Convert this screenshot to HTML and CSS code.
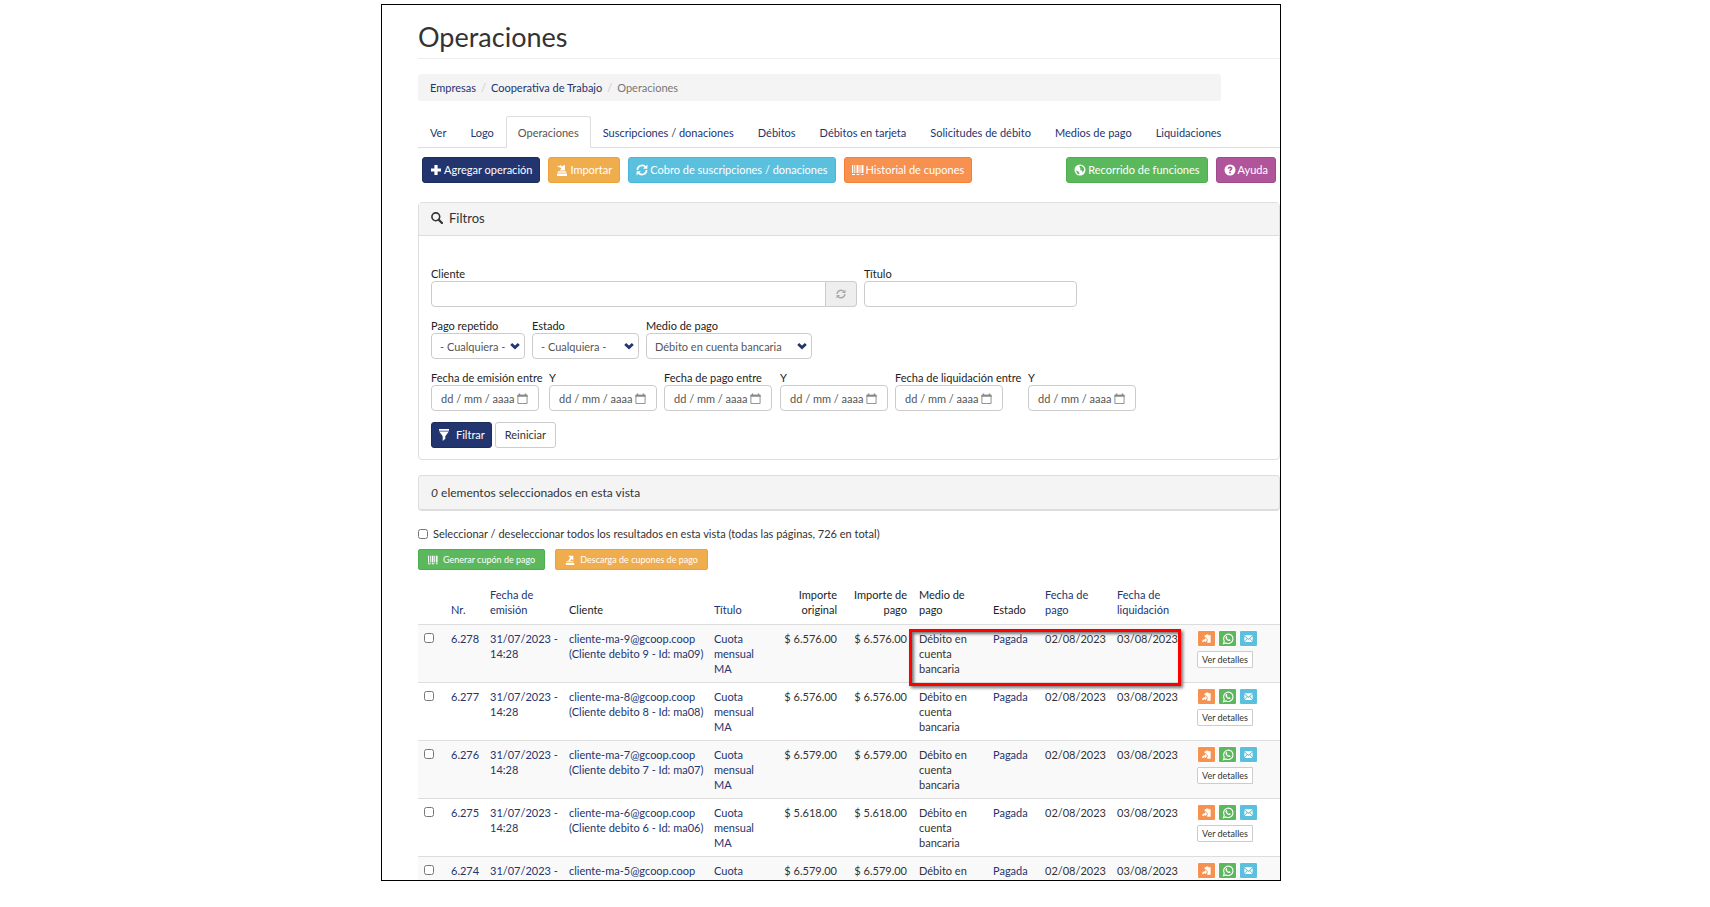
FILE: index.html
```
<!DOCTYPE html>
<html lang="es">
<head>
<meta charset="utf-8">
<title>Operaciones</title>
<link rel="stylesheet" href="styles.css">
</head>
<body>
<svg class="sprite" aria-hidden="true">
  <symbol id="plus" viewBox="0 0 12 12"><path d="M4.4 1h3.2v3.4H11v3.2H7.6V11H4.400V7.600H1V4.400h3.400z"/></symbol>
  <symbol id="import" viewBox="0 0 12 12"><path d="M1 9.500h10V12H1zM2.200 7.200h7.600l.8 1.500H1.400zM1.500 1.500l1.800.7L4.400.8l1 1.400L9 1v5.500H3.800L5.500 4.300 1.500 2.600z"/></symbol>
  <symbol id="export" viewBox="0 0 12 12"><path d="M1 9.500h10V12H1zM2.200 7.500h7.600l.7 1.300h-9zM4 1h6v5.500L8.200 4.800 6 7.200 3.800 7l2.400-3.500z"/></symbol>
  <symbol id="refresh" viewBox="0 0 12 12"><path d="M1.400 6A4.600 4.600 0 0 1 9.500 3.100M10.600 6a4.600 4.600 0 0 1-8.100 2.900" fill="none" stroke="currentColor" stroke-width="1.700"/><path d="M11.400.500v4.300H7.100zM.600 11.500V7.200h4.300z"/></symbol>
  <symbol id="barcode" viewBox="0 0 12 12"><path d="M0 1h1.200v8H0zM2.300 1h1v8h-1zM4.500 1h2v8h-2zM7.500 1h1v8h-1zM9.500 1h2v8h-2zM0 10h3v1H0zM4.500 10h3v1h-3zM9.500 10h2v1h-2z"/></symbol>
  <symbol id="globe" viewBox="0 0 12 12"><path fill-rule="evenodd" d="M6 .500a5.500 5.500 0 1 1 0 11 5.500 5.500 0 0 1 0-11zM5.200 2.200 7.500 1.800 9.800 3.800 10.200 6 8.600 8.400 7.800 6.300 6 6.200 6.500 4.500zM2 6.500 4.500 7.500 5.500 9 5 10.400 3 9.200z"/></symbol>
  <symbol id="question" viewBox="0 0 12 12"><path fill-rule="evenodd" d="M6 .500a5.500 5.500 0 1 1 0 11 5.500 5.500 0 0 1 0-11zM3.700 4.700h1.600c0-1 1.400-1 1.400-.1 0 .8-1.500.8-1.500 2.600h1.600c0-1 1.600-1.100 1.600-2.700 0-2.700-4.700-2.600-4.700.2zM5.200 8v1.500h1.600V8z"/></symbol>
  <symbol id="search" viewBox="0 0 12 12"><circle cx="4.800" cy="4.800" r="3.900" fill="none" stroke="currentColor" stroke-width="1.600"/><path d="M7.700 7.700 11 11" stroke="currentColor" stroke-width="2.200" stroke-linecap="round"/></symbol>
  <symbol id="chevron" viewBox="0 0 10 8"><path d="M1.200 2 5 5.600 8.800 2" fill="none" stroke="currentColor" stroke-width="2.800"/></symbol>
  <symbol id="calendar" viewBox="0 0 12 12"><path d="M1 2.500h10v9H1z" fill="none" stroke="currentColor"/><path d="M.500 2h11v2H.500zM2 .500h1.500V2H2zM8.500.500H10V2H8.500z"/></symbol>
  <symbol id="filter" viewBox="0 0 12 12"><path d="M1 0h10v1.700H1zM1.200 2.500h9.600L7.300 7.200v2.600L4.700 12V7.200z"/></symbol>
  <symbol id="paste" viewBox="0 0 12 12"><path d="M3.500 1.500h2V.500h3v1h3V11.500H7V9.500L8 8 5.500 5v-.8h-2zM1 7.500l3-.5V5l3 3-3 3V9.300L2 10.500H0z"/></symbol>
  <symbol id="whatsapp" viewBox="0 0 12 12"><path d="M1.500 10.600l.7-2.500A4.700 4.700 0 1 1 4 9.900z" fill="none" stroke="currentColor" stroke-width="1.100"/><path d="M4 3.200c.4-.4.800-.2.900.1l.4 1c0 .3-.5.600-.4.800.4.800 1 1.300 1.800 1.600.3 0 .5-.6.800-.5l1 .5c.3.200 0 1-.5 1.200C6 8.500 3.200 5.800 3.500 4.200z"/></symbol>
  <symbol id="mail" viewBox="0 0 12 12"><path d="M.5 1.500h11L6 6.300zM.5 3 3.700 6 .5 9.500zM11.500 3v6.500L8.300 6zM4.500 6.800 6 8l1.500-1.200L11 10.500H1z"/></symbol>
</svg>
<main class="frame">
  <h1 class="title">Operaciones</h1>
  <nav class="crumbs" aria-label="Ruta">
    <a href="#">Empresas</a><span class="sep">/</span><a href="#">Cooperativa de Trabajo</a><span class="sep">/</span><span class="here">Operaciones</span>
  </nav>
  <nav class="tabs" aria-label="Secciones">
    <a href="#">Ver</a><a href="#">Logo</a><a href="#" class="active">Operaciones</a><a href="#">Suscripciones / donaciones</a><a href="#">Débitos</a><a href="#">Débitos en tarjeta</a><a href="#">Solicitudes de débito</a><a href="#">Medios de pago</a><a href="#">Liquidaciones</a>
  </nav>
  <div class="toolbar">
    <button class="btn navy"><svg><use href="#plus"/></svg>Agregar operación</button>
    <button class="btn amber"><svg><use href="#import"/></svg>Importar</button>
    <button class="btn sky"><svg><use href="#refresh"/></svg>Cobro de suscripciones / donaciones</button>
    <button class="btn orange"><svg><use href="#barcode"/></svg>Historial de cupones</button>
    <button class="btn green push"><svg><use href="#globe"/></svg>Recorrido de funciones</button>
    <button class="btn purple"><svg><use href="#question"/></svg>Ayuda</button>
  </div>

  <section class="panel">
    <h2 class="panel-head"><svg><use href="#search"/></svg>Filtros</h2>
    <form class="filters">
      <div class="row">
        <div class="field client"><label for="cliente">Cliente</label>
          <div class="group"><input id="cliente" type="text"><span class="addon"><svg><use href="#refresh"/></svg></span></div></div>
        <div class="field subject"><label for="titulo">Título</label><input id="titulo" type="text"></div>
      </div>
      <div class="row">
        <div class="field repeated"><label for="repetido">Pago repetido</label><div class="pick"><select id="repetido"><option>- Cualquiera -</option></select><svg><use href="#chevron"/></svg></div></div>
        <div class="field status"><label for="estado">Estado</label><div class="pick"><select id="estado"><option>- Cualquiera -</option></select><svg><use href="#chevron"/></svg></div></div>
        <div class="field method"><label for="medio">Medio de pago</label><div class="pick"><select id="medio"><option>Débito en cuenta bancaria</option></select><svg><use href="#chevron"/></svg></div></div>
      </div>
      <div class="dates">
        <div class="field"><label for="d1">Fecha de emisión entre</label><div class="date"><input id="d1" type="text" value="dd / mm / aaaa"><svg><use href="#calendar"/></svg></div></div>
        <div class="field"><label for="d2">Y</label><div class="date"><input id="d2" type="text" value="dd / mm / aaaa"><svg><use href="#calendar"/></svg></div></div>
        <div class="field"><label for="d3">Fecha de pago entre</label><div class="date"><input id="d3" type="text" value="dd / mm / aaaa"><svg><use href="#calendar"/></svg></div></div>
        <div class="field"><label for="d4">Y</label><div class="date"><input id="d4" type="text" value="dd / mm / aaaa"><svg><use href="#calendar"/></svg></div></div>
        <div class="field"><label for="d5">Fecha de liquidación entre</label><div class="date"><input id="d5" type="text" value="dd / mm / aaaa"><svg><use href="#calendar"/></svg></div></div>
        <div class="field"><label for="d6">Y</label><div class="date"><input id="d6" type="text" value="dd / mm / aaaa"><svg><use href="#calendar"/></svg></div></div>
      </div>
      <div class="actions">
        <button class="btn navy spaced" type="button"><svg><use href="#filter"/></svg>Filtrar</button>
        <button class="btn plain" type="reset">Reiniciar</button>
      </div>
    </form>
  </section>

  <div class="selected"><em>0</em> elementos seleccionados en esta vista</div>
  <label class="all"><input type="checkbox">Seleccionar / deseleccionar todos los resultados en esta vista (todas las páginas, 726 en total)</label>
  <div class="bulk">
    <button class="btn small green"><svg><use href="#barcode"/></svg>Generar cupón de pago</button>
    <button class="btn small amber"><svg><use href="#export"/></svg>Descarga de cupones de pago</button>
  </div>

  <table class="ops">
    <colgroup><col class="c-check"><col class="c-nr"><col class="c-issued"><col class="c-client"><col class="c-title"><col class="c-amount"><col class="c-paid"><col class="c-method"><col class="c-status"><col class="c-date"><col class="c-settled"><col></colgroup>
    <thead><tr>
      <th></th><th><a href="#">Nr.</a></th><th><a href="#">Fecha de<br>emisión</a></th><th>Cliente</th><th><a href="#">Título</a></th><th class="num">Importe<br>original</th><th class="num">Importe de<br>pago</th><th>Medio de<br>pago</th><th>Estado</th><th><a href="#">Fecha de<br>pago</a></th><th><a href="#">Fecha de<br>liquidación</a></th><th></th>
    </tr></thead>
    <tbody>
      <tr><td><input type="checkbox" aria-label="6.278"></td><td><a href="#">6.278</a></td><td><a href="#">31/07/2023 -<br>14:28</a></td><td><a href="#">cliente-ma-9@gcoop.coop<br>(Cliente debito 9 - Id: ma09)</a></td><td><a href="#">Cuota<br>mensual<br>MA</a></td><td class="num">$ 6.576.00</td><td class="num">$ 6.576.00</td><td class="marked">Débito en<br>cuenta<br>bancaria<div class="mark"></div></td><td><a href="#">Pagada</a></td><td>02/08/2023</td><td>03/08/2023</td>
        <td class="tools"><div class="icons"><button class="mini orange" aria-label="Copiar"><svg><use href="#paste"/></svg></button><button class="mini green" aria-label="WhatsApp"><svg><use href="#whatsapp"/></svg></button><button class="mini sky" aria-label="Correo"><svg><use href="#mail"/></svg></button></div><button class="details">Ver detalles</button></td></tr>
      <tr><td><input type="checkbox" aria-label="6.277"></td><td><a href="#">6.277</a></td><td><a href="#">31/07/2023 -<br>14:28</a></td><td><a href="#">cliente-ma-8@gcoop.coop<br>(Cliente debito 8 - Id: ma08)</a></td><td><a href="#">Cuota<br>mensual<br>MA</a></td><td class="num">$ 6.576.00</td><td class="num">$ 6.576.00</td><td>Débito en<br>cuenta<br>bancaria</td><td><a href="#">Pagada</a></td><td>02/08/2023</td><td>03/08/2023</td>
        <td class="tools"><div class="icons"><button class="mini orange" aria-label="Copiar"><svg><use href="#paste"/></svg></button><button class="mini green" aria-label="WhatsApp"><svg><use href="#whatsapp"/></svg></button><button class="mini sky" aria-label="Correo"><svg><use href="#mail"/></svg></button></div><button class="details">Ver detalles</button></td></tr>
      <tr><td><input type="checkbox" aria-label="6.276"></td><td><a href="#">6.276</a></td><td><a href="#">31/07/2023 -<br>14:28</a></td><td><a href="#">cliente-ma-7@gcoop.coop<br>(Cliente debito 7 - Id: ma07)</a></td><td><a href="#">Cuota<br>mensual<br>MA</a></td><td class="num">$ 6.579.00</td><td class="num">$ 6.579.00</td><td>Débito en<br>cuenta<br>bancaria</td><td><a href="#">Pagada</a></td><td>02/08/2023</td><td>03/08/2023</td>
        <td class="tools"><div class="icons"><button class="mini orange" aria-label="Copiar"><svg><use href="#paste"/></svg></button><button class="mini green" aria-label="WhatsApp"><svg><use href="#whatsapp"/></svg></button><button class="mini sky" aria-label="Correo"><svg><use href="#mail"/></svg></button></div><button class="details">Ver detalles</button></td></tr>
      <tr><td><input type="checkbox" aria-label="6.275"></td><td><a href="#">6.275</a></td><td><a href="#">31/07/2023 -<br>14:28</a></td><td><a href="#">cliente-ma-6@gcoop.coop<br>(Cliente debito 6 - Id: ma06)</a></td><td><a href="#">Cuota<br>mensual<br>MA</a></td><td class="num">$ 5.618.00</td><td class="num">$ 5.618.00</td><td>Débito en<br>cuenta<br>bancaria</td><td><a href="#">Pagada</a></td><td>02/08/2023</td><td>03/08/2023</td>
        <td class="tools"><div class="icons"><button class="mini orange" aria-label="Copiar"><svg><use href="#paste"/></svg></button><button class="mini green" aria-label="WhatsApp"><svg><use href="#whatsapp"/></svg></button><button class="mini sky" aria-label="Correo"><svg><use href="#mail"/></svg></button></div><button class="details">Ver detalles</button></td></tr>
      <tr><td><input type="checkbox" aria-label="6.274"></td><td><a href="#">6.274</a></td><td><a href="#">31/07/2023 -</a></td><td><a href="#">cliente-ma-5@gcoop.coop</a></td><td><a href="#">Cuota</a></td><td class="num">$ 6.579.00</td><td class="num">$ 6.579.00</td><td>Débito en</td><td><a href="#">Pagada</a></td><td>02/08/2023</td><td>03/08/2023</td>
        <td class="tools"><div class="icons"><button class="mini orange" aria-label="Copiar"><svg><use href="#paste"/></svg></button><button class="mini green" aria-label="WhatsApp"><svg><use href="#whatsapp"/></svg></button><button class="mini sky" aria-label="Correo"><svg><use href="#mail"/></svg></button></div></td></tr>
    </tbody>
  </table>
</main>
</body>
</html>
```
FILE: styles.css
```
* { box-sizing: border-box; }
body {
  margin: 0;
  height: 100vh;
  padding: 4px 429px 26px 381px;
  overflow: hidden;
  background: #fff;
  color: #333;
  font: 11px/15px Lato, "Liberation Sans", sans-serif;
}
.sprite { display: none; }
svg { width: 12px; height: 12px; fill: currentColor; flex: none; }
a { color: #22356f; text-decoration: none; }
button, input, select { font: inherit; color: inherit; margin: 0; }
.frame {
  height: 100%;
  overflow: hidden;
  border: 1px solid #000;
  padding-left: 36px;
}
.title {
  margin: 0;
  padding: 16px 0 6px;
  border-bottom: 1px solid #eee;
  font-size: 27px;
  font-weight: 400;
  line-height: 31px;
}
.crumbs {
  display: flex;
  margin: 15px 59px 0 0;
  padding: 6px 12px;
  border-radius: 3px;
  background: #f4f4f4;
}
.sep { padding: 0 5px; color: #ccc; }
.here { color: #777; }
.tabs {
  display: flex;
  margin-top: 15px;
  border-bottom: 1px solid #ddd;
}
.tabs a {
  padding: 8px 11px 7px;
  margin-bottom: -1px;
  border: 1px solid transparent;
  border-radius: 3px 3px 0 0;
  white-space: nowrap;
}
.tabs .active { color: #555; background: #fff; border-color: #ddd #ddd #fff; }
.toolbar { display: flex; gap: 8px; padding: 9px 4px 0; }
.push { margin-left: auto; }
.btn {
  display: inline-flex;
  align-items: center;
  gap: 2px;
  height: 26px;
  padding: 0 7px 1px;
  border: 1px solid;
  border-radius: 3px;
  color: #fff;
  white-space: nowrap;
}
.navy { background: #22356f; border-color: #1c2c5c; }
.amber { background: #f0ad4e; border-color: #eea236; }
.sky { background: #5bc0de; border-color: #46b8da; }
.orange { background: #f79150; border-color: #f67f33; }
.green { background: #5cb85c; border-color: #4cae4c; }
.purple { background: #b0559a; border-color: #a04a8b; }
.plain { background: #fff; border-color: #ccc; color: #333; padding: 0 9px 1px; }
.spaced { gap: 6px; padding: 0 6px 1px; }
.panel {
  margin-top: 19px;
  border: 1px solid #ddd;
  border-radius: 4px;
}
.panel-head {
  display: flex;
  align-items: center;
  gap: 6px;
  margin: 0;
  padding: 7px 12px 9px;
  border-bottom: 1px solid #ddd;
  background: #f4f4f4;
  font-size: 13px;
  font-weight: 400;
  line-height: 16px;
}
.filters {
  display: flex;
  flex-direction: column;
  gap: 11px;
  padding: 30px 12px 11px;
}
.row { display: flex; gap: 7px; }
.field label { display: block; color: #222; white-space: nowrap; }
.field input, .field select {
  display: block;
  width: 100%;
  height: 26px;
  border: 1px solid #ccc;
  border-radius: 4px;
  background: #fff;
  color: #555;
}
.client { width: 426px; }
.subject { width: 213px; }
.repeated { width: 94px; }
.status { width: 107px; }
.method { width: 166px; }
.group { display: flex; }
.group input { border-radius: 4px 0 0 4px; }
.addon {
  display: flex;
  align-items: center;
  justify-content: center;
  flex: 0 0 31px;
  border: 1px solid #ccc;
  border-left: 0;
  border-radius: 0 4px 4px 0;
  background: #eee;
  color: #aaa;
}
.addon svg { width: 10px; height: 10px; }
.pick, .date { display: grid; align-items: center; }
.pick > *, .date > * { grid-area: 1 / 1; }
.pick select { appearance: none; padding: 0 8px; }
.pick svg {
  justify-self: end;
  width: 10px;
  height: 8px;
  margin-right: 5px;
  color: #22356f;
  pointer-events: none;
}
.dates {
  display: grid;
  grid-template-columns: 118px 115px 116px 115px 133px 109px;
}
.date { width: 108px; }
.date input { padding: 0 9px; }
.date svg { justify-self: end; width: 11px; height: 11px; margin-right: 11px; color: #888; }
.actions { display: flex; gap: 3px; }
.selected {
  margin-top: 15px;
  padding: 8px 12px;
  border: 1px solid #ddd;
  border-bottom-width: 2px;
  border-radius: 4px;
  background: #f4f4f4;
  font-size: 12px;
  line-height: 17px;
}
.all { display: flex; align-items: center; gap: 5px; margin-top: 15px; }
input[type="checkbox"] { display: block; width: 10px; height: 10px; }
.bulk { display: flex; gap: 10px; margin-top: 8px; }
.small { height: 21px; gap: 5px; padding: 0 9px; font-size: 9px; border-radius: 2px; }
.small svg { width: 10px; height: 10px; }
.ops {
  width: 100%;
  margin-top: 11px;
  border-collapse: collapse;
  table-layout: fixed;
  white-space: nowrap;
}
.ops th { padding: 6px 6px 7px; font-weight: 400; text-align: left; vertical-align: bottom; color: #222; }
.ops td { padding: 6px; border-top: 1px solid #ddd; vertical-align: top; }
.ops tbody tr:nth-child(odd) { background: #f9f9f9; }
.ops .num { text-align: right; }
.ops input { margin-top: 2px; }
.c-check { width: 27px; }
.c-nr { width: 39px; }
.c-issued { width: 79px; }
.c-client { width: 145px; }
.c-title { width: 70px; }
.c-amount { width: 65px; }
.c-paid { width: 70px; }
.c-method { width: 74px; }
.c-status { width: 52px; }
.c-date { width: 72px; }
.c-settled { width: 80px; }
.marked { position: relative; }
.mark {
  position: absolute;
  top: 4px;
  left: -4px;
  width: 272px;
  height: 57px;
  border: 3px solid #f00;
  box-shadow: 2px 2px 3px #777, inset 2px 2px 3px #777;
}
.ops .tools { padding: 5px 6px 0; }
.icons { display: flex; gap: 2px; }
.mini {
  display: flex;
  align-items: center;
  justify-content: center;
  width: 19px;
  height: 17px;
  padding: 0;
  border: 1px solid;
  border-radius: 2px;
  color: #fff;
}
.mini svg { width: 9px; height: 9px; }
.mini.green svg { width: 12px; height: 12px; }
.details {
  display: block;
  height: 17px;
  margin-top: 4px;
  padding: 0 4px;
  border: 1px solid #ccc;
  border-radius: 2px 0 0 2px;
  background: #fff;
  font-size: 9px;
  line-height: 15px;
}
```
